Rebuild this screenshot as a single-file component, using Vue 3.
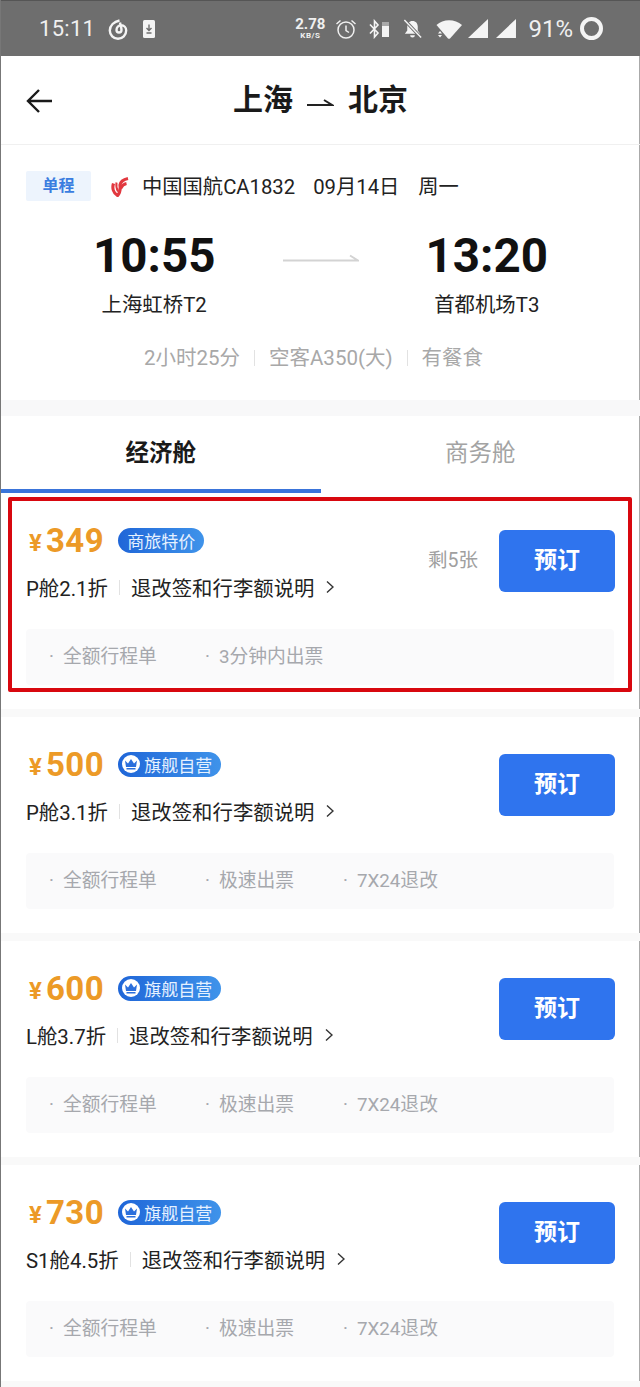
<script setup>
const fares = [
  { price: 349, badge: '商旅特价', crown: false, cabin: 'P舱2.1折', left: '剩5张', tags: ['全额行程单', '3分钟内出票'], outlined: true },
  { price: 500, badge: '旗舰自营', crown: true, cabin: 'P舱3.1折', tags: ['全额行程单', '极速出票', '7X24退改'] },
  { price: 600, badge: '旗舰自营', crown: true, cabin: 'L舱3.7折', tags: ['全额行程单', '极速出票', '7X24退改'] },
  { price: 730, badge: '旗舰自营', crown: true, cabin: 'S1舱4.5折', tags: ['全额行程单', '极速出票', '7X24退改'] }
]
</script>

<template>
  <div class="page">
    <!-- status bar -->
    <div class="status">
      <div class="status-left">
        <span class="clock">15:11</span>
        <svg class="ic" width="20" height="22" viewBox="0 0 20 22" fill="none" stroke="#f4f4f4" stroke-width="2.400">
          <path d="M11.500 2.500C6 3.500 1.800 7.500 1.800 12.500a8.200 8.200 0 0 0 16.400 0c0-3-2.200-5.200-5-5.200-2.600 0-4.700 2-4.700 4.700a2.500 2.500 0 0 0 5 0c0-2-.8-4.500-1.500-7.500" />
        </svg>
        <svg class="ic dl" width="12" height="20" viewBox="0 0 12 20">
          <rect width="12" height="18" y="1" rx="1.500" fill="#f4f4f4" />
          <path d="M6 5.500v6M3.500 9 6 11.500 8.500 9M3.500 14h5" stroke="#6e6e6e" stroke-width="1.400" fill="none" />
        </svg>
      </div>
      <div class="status-right">
        <div class="speed"><b>2.78</b><small>KB/S</small></div>
        <svg width="22" height="22" viewBox="0 0 22 22" fill="none" stroke="#f0f0f0" stroke-width="1.500">
          <circle cx="11" cy="12" r="8" />
          <path d="M11 7.500V12.500L14 14.500M1.500 6 5.500 2.500M20.500 6 16.500 2.500" />
        </svg>
        <svg width="21" height="20" viewBox="0 0 21 20">
          <path d="M1 5.500 9 14 5.500 18V2L9 6 1 14.500" fill="none" stroke="#f4f4f4" stroke-width="1.600" />
          <rect x="13" y="3" width="7" height="4" fill="#aaa" />
          <rect x="13" y="7" width="7" height="11" fill="#f4f4f4" />
        </svg>
        <svg width="21" height="22" viewBox="0 0 22 22">
          <path d="M11 2.500c-3.500 0-5.500 2.500-5.500 6v4L3 16h16l-2.500-3.500v-4c0-3.500-2-6-5.500-6ZM8.500 17.500h5a2.500 2.500 0 0 1-5 0Z" fill="#f4f4f4" />
          <path d="M2.500 1.500 20 20" stroke="#6e6e6e" stroke-width="3.500" />
          <path d="M2.500 1.500 20 20" stroke="#f4f4f4" stroke-width="1.500" />
        </svg>
        <svg class="wifi" width="28" height="20" viewBox="0 0 28 20">
          <path d="M1.500 6C8 -.5 20-.5 27 6L15 19.500a2 2 0 0 1-2 0Z" fill="#f4f4f4" />
          <path d="M3 14.500 5 12l2 2.500ZM3 16h4l-2 2.500Z" fill="#f4f4f4" />
        </svg>
        <svg class="sig1" width="20" height="19" viewBox="0 0 21 20"><path d="M21 0V20H0Z" fill="#f4f4f4" /></svg>
        <svg class="sig2" width="20" height="19" viewBox="0 0 21 20"><path d="M21 0V20H0Z" fill="#f4f4f4" /></svg>
        <span class="batt">91%</span>
        <span class="ring"></span>
      </div>
    </div>

    <!-- header -->
    <div class="head">
      <svg class="back" width="28" height="26" viewBox="0 0 28 26" fill="none" stroke="#1a1a1a" stroke-width="2.400">
        <path d="M27 13H3M14 2 3 13l11 11" />
      </svg>
      <div class="title">
        <span>上海</span>
        <svg class="title-arrow" width="27" height="7" viewBox="0 0 27 7"><path d="M0 6H25L17 1" fill="none" stroke="#222" stroke-width="2" /></svg>
        <span>北京</span>
      </div>
    </div>

    <!-- flight -->
    <div class="flight">
      <div class="meta">
        <span class="trip">单程</span>
        <svg class="logo" width="18" height="21" viewBox="0 0 18 21" fill="none" stroke="#e2383f" stroke-width="3.200">
          <path d="M2.500 7.500C1 12 2.500 17 6.500 19.500 9 17 9.500 13 9 9 9.500 6 12.500 3.500 17 2.500" />
          <path d="M5.500 6.500C5 10 5.500 13 7 15.500" stroke-width="2" />
          <path d="M9.500 12.500C11 9.500 13 8 15.500 7.500" />
        </svg>
        <span class="airline">中国国航CA1832</span>
        <span class="date">09月14日</span>
        <span class="week">周一</span>
      </div>
      <div class="times">
        <div class="end">
          <div class="time">10:55</div>
          <div class="port">上海虹桥T2</div>
        </div>
        <svg class="route" width="76" height="8" viewBox="0 0 76 8"><path d="M0 6.500H75L67 1.500" fill="none" stroke="#d3d3d3" stroke-width="2" /></svg>
        <div class="end">
          <div class="time">13:20</div>
          <div class="port">首都机场T3</div>
        </div>
      </div>
      <div class="extra">
        <span>2小时25分</span><i></i><span>空客A350(大)</span><i></i><span>有餐食</span>
      </div>
    </div>

    <!-- tabs -->
    <div class="tabs">
      <div class="tab on">经济舱</div>
      <div class="tab">商务舱</div>
    </div>

    <!-- fares -->
    <div v-for="f in fares" :key="f.price" class="fare">
      <div class="fare-top">
        <div class="fare-main">
          <div class="price-row">
            <span class="yen">¥</span><span class="price">{{ f.price }}</span>
            <span class="badge">
              <span v-if="f.crown" class="crown">
                <svg width="14" height="12" viewBox="0 0 14 12" fill="#2b6fdc"><path d="M1 2.500 4 5.500 7 1l3 4.500 3-3-1 6.500H2ZM2.500 10h9v1.500h-9Z" /></svg>
              </span>
              {{ f.badge }}
            </span>
          </div>
          <div class="rule-row">
            <span>{{ f.cabin }}</span><i></i><span>退改签和行李额说明</span>
            <svg width="8" height="14" viewBox="0 0 8 14" fill="none" stroke="#333" stroke-width="1.400"><path d="m1 1.500 6 5.500-6 5.500" /></svg>
          </div>
        </div>
        <span v-if="f.left" class="left">{{ f.left }}</span>
        <button class="book">预订</button>
      </div>
      <div class="tags">
        <span v-for="t in f.tags" :key="t" class="tag">{{ t }}</span>
      </div>
      <div v-if="f.outlined" class="outline"></div>
    </div>
  </div>
</template>

<style scoped>
.page {
  width: 640px;
  height: 1387px;
  overflow: hidden;
  box-sizing: border-box;
  border-left: 1px solid #777;
  background: #fff;
  box-shadow: inset -1px 0 #aaa;
  font-family: Roboto, "Noto Sans CJK SC", sans-serif;
  color: #222;
}
.status {
  height: 56px;
  box-sizing: border-box;
  border-top: 1px solid #555;
  background: #6e6e6e;
  color: #f0f0f0;
  display: flex;
  justify-content: space-between;
  align-items: center;
  padding: 0 37px 0 38px;
}
.status-left, .status-right { display: flex; align-items: center; }
.status-left { gap: 13px; }
.status-right { gap: 12px; }
.clock { font: 22px Roboto, sans-serif; letter-spacing: 0.3px; }
.dl { margin-left: 2px; }
.speed { display: flex; flex-direction: column; align-items: center; line-height: 1; margin-right: -2px; }
.speed b { font-size: 15px; font-weight: 700; }
.speed small { font-size: 8px; font-weight: 700; letter-spacing: 0.5px; }
.wifi { margin-right: -7px; }
.sig1 { margin-right: -4px; }
.batt { font-size: 24px; }
.ring {
  width: 23px;
  height: 23px;
  box-sizing: border-box;
  border: 4px solid #f4f4f4;
  border-radius: 50%;
  margin-left: -5px;
}
.head {
  height: 89px;
  box-sizing: border-box;
  border-bottom: 1px solid #f0f0f0;
  display: flex;
  align-items: center;
  justify-content: center;
  position: relative;
}
.back { position: absolute; left: 24px; top: 32px; }
.title {
  display: flex;
  align-items: center;
  gap: 14px;
  font-size: 30px;
  font-weight: 700;
  color: #1a1a1a;
  padding-bottom: 6px;
}
.title-arrow { margin-top: 10px; }
.flight {
  height: 271px;
  box-sizing: border-box;
  padding: 26px 25px 0;
  border-bottom: 16px solid #f8f8f9;
}
.meta { display: flex; align-items: center; height: 30px; font-size: 20.300px; color: #222; }
.airline, .date, .week { margin-bottom: 3px; }
.trip {
  width: 65px;
  height: 30px;
  line-height: 30px;
  text-align: center;
  background: #edf4fd;
  color: #3a7de0;
  font-size: 16px;
  font-weight: 700;
  border-radius: 2px;
  margin-right: 20px;
}
.logo { margin-right: 13px; }
.date { margin-left: 18px; }
.week { margin-left: 19px; }
.times { display: flex; justify-content: space-between; align-items: flex-start; padding: 26px 67px 0 67px; }
.end { text-align: center; }
.time { font: 700 47.500px/58px Roboto, sans-serif; color: #111; }
.port { font-size: 20.400px; line-height: 28px; margin-top: 6px; color: #222; }
.route { margin-top: 27px; }
.extra {
  display: flex;
  justify-content: center;
  align-items: center;
  margin-top: 25px;
  padding-right: 14px;
  font-size: 20.500px;
  line-height: 28px;
  color: #a8a8a8;
}
.extra i { width: 1px; height: 16px; background: #e2e2e2; margin: 0 14px; }
.tabs { display: flex; height: 77px; box-sizing: border-box; }
.tab {
  flex: 1;
  text-align: center;
  font-size: 23.500px;
  line-height: 74px;
  color: #a3a3a3;
}
.tab.on {
  color: #1a1a1a;
  font-weight: 700;
  border-bottom: 4px solid #3a74da;
}
.fare {
  position: relative;
  height: 224px;
  box-sizing: border-box;
  padding: 27px 25px 0;
  border-bottom: 8px solid #f9f9f9;
}
.fare-top { display: flex; align-items: flex-start; height: 109px; }
.fare-main { flex: 1; }
.price-row { display: flex; align-items: center; height: 40px; }
.yen { font-size: 24px; font-weight: 700; color: #ec9a27; margin: 6px 4px 0 3px; }
.price { font-size: 33px; font-weight: 700; color: #ec9a27; letter-spacing: 0.5px; }
.badge {
  display: inline-flex;
  align-items: center;
  height: 25px;
  padding: 0 9px;
  margin-left: 14px;
  border-radius: 13px;
  background: linear-gradient(90deg, #1f66d8, #3f93ea);
  color: #e6f1ff;
  font-size: 17px;
}
.crown {
  width: 18px;
  height: 18px;
  border-radius: 50%;
  background: #fff;
  display: flex;
  align-items: center;
  justify-content: center;
  margin: 0 4px 0 -5px;
}
.rule-row {
  display: flex;
  align-items: center;
  height: 28px;
  margin-top: 13px;
  font-size: 20.400px;
  color: #222;
}
.rule-row i { width: 1px; height: 15px; background: #e2e2e2; margin: 0 11px; }
.rule-row svg { margin-left: 12px; }
.left { font-size: 19.500px; color: #a0a0a0; margin: 24px 21px 0 0; }
.book {
  width: 116px;
  height: 62px;
  border: none;
  border-radius: 6px;
  background: #2f74ee;
  color: #fff;
  font: 700 23px "Noto Sans CJK SC", sans-serif;
  padding: 0 0 6px;
  margin-top: 10px;
}
.tags {
  display: flex;
  align-items: center;
  height: 56px;
  width: 588px;
  box-sizing: border-box;
  padding: 0 0 5px 23px;
  background: #fafafb;
  border-radius: 4px;
  font-size: 18.800px;
  color: #a6a8ad;
}
.tag { width: 156px; }
.tag::before { content: "·"; margin-right: 9px; }
.tag + .tag { width: 138px; }
.outline {
  position: absolute;
  left: 7px;
  top: 4px;
  width: 624px;
  height: 195px;
  box-sizing: border-box;
  border: 4px solid #d8080f;
  border-radius: 2px;
}
</style>
